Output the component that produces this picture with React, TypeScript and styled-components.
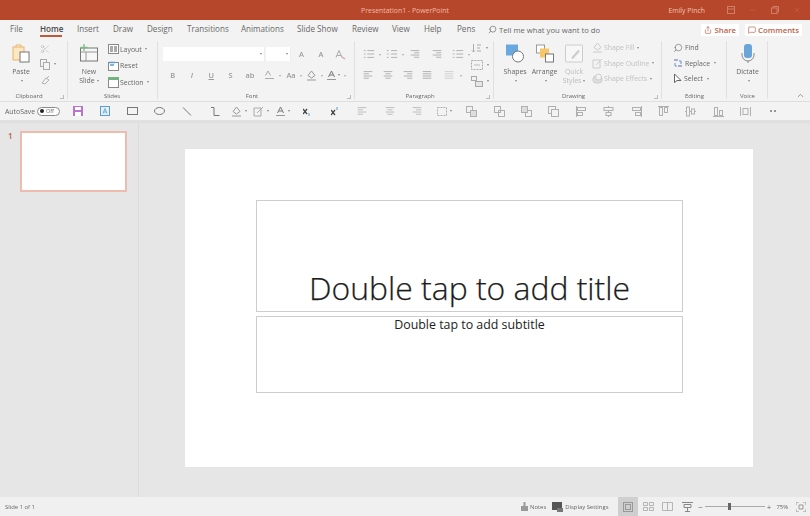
import React from "react";
import styled, { createGlobalStyle } from "styled-components";
import { Scissors, Search, MessageSquare, Share, X, Minus, ChevronUp } from "lucide-react";

const Global = createGlobalStyle`
  html, body { margin: 0; padding: 0; background: #e6e6e6; }
  body { font-family: "Open Sans", "Noto Sans", "Liberation Sans", sans-serif; }
  * { box-sizing: border-box; }
`;

const Page = styled.div`
  width: 810px; height: 516px; display: flex; flex-direction: column; overflow: hidden; background: #e6e6e6;
`;
const TitleBar = styled.header`
  height: 20px; background: #b7472a; display: flex; align-items: center; position: relative; flex: none;
`;
const DocName = styled.div`
  width: 100%; text-align: center; padding-right: 0; font-size: 6.9px; color: #f0bba9;
`;
const WindowControls = styled.div`
  position: absolute; right: 9px; top: 0; height: 20px; display: flex; align-items: center; gap: 14px; color: #cf7f66;
`;
const UserName = styled.span`
  font-size: 6.9px; color: #eec3b4; margin-right: 8px;
`;
const TabRow = styled.nav`
  height: 19px; background: #f3f3f3; display: flex; align-items: center; flex: none; padding-left: 10px; position: relative;
`;
const Tab = styled.span<{ $active?: boolean; $w: number }>`
  width: ${p => p.$w}px; flex: none; height: 19px; line-height: 18px; font-size: 8.1px; white-space: nowrap;
  color: ${p => (p.$active ? "#4a4a4a" : "#686868")}; font-weight: ${p => (p.$active ? 600 : 400)}; position: relative;
  ${p => p.$active && `&::after { content: ""; position: absolute; left: 0; width: 22px; top: 15px; height: 1.5px; background: #c0583c; }`}
`;
const TellMe = styled.span`
  display: flex; align-items: center; gap: 2px; font-size: 7.7px; color: #686868; margin-left: -2px;
`;
const Actions = styled.div`
  position: absolute; right: 8px; top: 4px; display: flex; gap: 6px;
`;
const ActionButton = styled.span`
  height: 12px; background: #fff; color: #bb6048; font-size: 7.8px; font-weight: 600; display: flex; align-items: center; gap: 2px; padding: 0 3px;
`;
const Ribbon = styled.section`
  height: 63px; background: #f3f3f3; display: flex; flex: none; position: relative; border-bottom: 1px solid #dedede;
  filter: blur(0.3px);
`;
const Group = styled.div<{ $w: number }>`
  width: ${p => p.$w}px; flex: none; display: flex; flex-direction: column; position: relative;
  &::after { content: ""; position: absolute; right: 0; top: 2px; bottom: 2px; width: 1px; background: #e0e0e0; }
`;
const GroupBody = styled.div`
  flex: 1; display: flex; min-height: 0; padding-top: 5px;
`;
const GroupLabel = styled.div<{ $pr?: number }>`
  height: 8px; line-height: 8px; margin-bottom: 1px; font-size: 6px; text-align: center; color: #666; flex: none; padding-right: ${p => p.$pr ?? 9}px;
`;
const Launcher = styled.span`
  position: absolute; right: 4px; bottom: 2px; width: 4px; height: 4px; border-right: 1px solid #bbb; border-bottom: 1px solid #bbb;
`;
const Big = styled.div<{ $w: number; $ml?: number; $off?: boolean }>`
  width: ${p => p.$w}px; margin-left: ${p => p.$ml ?? 0}px; flex: none; display: flex; flex-direction: column; align-items: center;
  font-size: 6.9px; line-height: 9px; color: ${p => (p.$off ? "#bbb" : "#666")}; text-align: center;
  svg { flex: none; height: 19px; margin-bottom: 4px; }
`;
const BigLine = styled.span`
  display: flex; align-items: center; justify-content: center; height: 9px;
`;
const Stack = styled.div<{ $ml: number; $mt: number; $h: number }>`
  margin-left: ${p => p.$ml}px; margin-top: ${p => p.$mt}px; flex: none; display: flex; flex-direction: column;
  & > div { height: ${p => p.$h}px; }
`;
const Line = styled.div<{ $off?: boolean; $gap?: number }>`
  display: flex; align-items: center; gap: ${p => p.$gap ?? 2}px; font-size: 6.9px; white-space: nowrap; color: ${p => (p.$off ? "#c2c2c2" : "#666")};
`;
const Caret = styled.span`
  display: inline-block; flex: none; width: 0; height: 0; border-left: 1.5px solid transparent; border-right: 1.5px solid transparent; border-top: 2px solid #888; margin-left: 2px;
`;
const ColumnGrid = styled.div<{ $pl: number }>`
  display: flex; flex-direction: column; padding-left: ${p => p.$pl}px; gap: 7px; padding-top: 3px;
`;
const FieldRow = styled.div`
  display: flex; align-items: center; height: 14px;
`;
const Field = styled.div<{ $w: number; $mr?: number }>`
  width: ${p => p.$w}px; height: 14px; background: #fff; border-right: 1px solid #eee; flex: none; margin-right: ${p => p.$mr ?? 0}px;
  display: flex; align-items: center; justify-content: flex-end; padding-right: 2px;
`;
const IconRow = styled.div`
  display: flex; align-items: center; height: 14px;
`;
const Cell = styled.span<{ $w: number; $caret?: boolean; $italic?: boolean; $u?: boolean }>`
  width: ${p => p.$w}px; display: flex; justify-content: center; align-items: center; font-size: 7.4px; color: #9a9a9a; flex: none; font-weight: 600; position: relative;
  font-style: ${p => (p.$italic ? "italic" : "normal")}; text-decoration: ${p => (p.$u ? "underline" : "none")};
  ${p => p.$caret && `&::after { content: ""; position: absolute; right: -1px; top: 50%; border-left: 1.5px solid transparent; border-right: 1.5px solid transparent; border-top: 2px solid #aaa; }`}
`;
const Collapse = styled.span`
  position: absolute; right: 5px; bottom: 1px; color: #777; display: flex;
`;
const Qat = styled.section`
  height: 19px; background: #f3f3f3; display: flex; align-items: center; flex: none; padding-left: 5px; border-bottom: 1px solid #e1e1e1;
  filter: blur(0.3px);
`;
const AutoSave = styled.span`
  font-size: 6.9px; color: #666; width: 32px; flex: none;
`;
const Toggle = styled.span`
  width: 23px; height: 9px; border: 1px solid #8a8a8a; border-radius: 5px; background: #fff; flex: none; display: flex; align-items: center; font-size: 5.4px; color: #666; padding-left: 2px; gap: 2px; margin-right: 4px;
  &::before { content: ""; width: 4px; height: 4px; border-radius: 50%; background: #222; }
`;
const QatCell = styled.span<{ $w: number }>`
  width: ${p => p.$w}px; flex: none; display: flex; justify-content: center; align-items: center; height: 14px; gap: 1px;
`;
const Gutter = styled.div`
  height: 2px; background: #e0e0e0; flex: none;
`;
const Main = styled.main`
  flex: 1; display: flex; min-height: 0; background: #e6e6e6;
`;
const Sidebar = styled.aside`
  width: 139px; flex: none; border-right: 1px solid #dcdcdc; display: flex; padding: 8px 0 0 8px; gap: 7px; align-items: flex-start;
`;
const SlideNo = styled.span`
  font-size: 8px; line-height: 10px; color: #b7583f; font-weight: 600; width: 5px;
`;
const Thumb = styled.div`
  width: 107px; height: 61px; background: #fff; border: 2px solid #eebcae;
`;
const Canvas = styled.div`
  flex: 1; padding: 26px 57px 30px 46px; display: flex; min-width: 0;
`;
const Slide = styled.div`
  flex: 1; background: #fff; padding: 51px 70px 74px 71px; display: flex; flex-direction: column; gap: 4px;
`;
const TitleBox = styled.div`
  height: 112px; flex: none; border: 1px solid #cdcdcd; display: flex; align-items: flex-end; justify-content: center;
  font-size: 31.9px; line-height: 44px; font-weight: 300; color: #1c1c1c; padding-bottom: 1px; white-space: nowrap; -webkit-text-stroke: 0.25px #1c1c1c;
`;
const SubtitleBox = styled.div`
  flex: 1; border: 1px solid #cdcdcd; text-align: center; font-size: 12.4px; line-height: 16px; color: #222;
`;
const StatusBar = styled.footer`
  height: 19px; background: #f0f0f0; display: flex; align-items: center; flex: none; padding-left: 5px; font-size: 5.9px; color: #666;
  filter: blur(0.25px);
`;
const StatusRight = styled.div`
  margin-left: auto; display: flex; align-items: center; height: 19px; padding-right: 4px;
`;
const StatusItem = styled.span<{ $ml: number }>`
  margin-left: ${p => p.$ml}px; display: flex; align-items: center; gap: 2px; white-space: nowrap;
`;
const ViewButton = styled.span<{ $on?: boolean }>`
  width: 19.7px; height: 19px; display: flex; align-items: center; justify-content: center; background: ${p => (p.$on ? "#cfcfcf" : "transparent")};
`;
const Views = styled.div`
  display: flex; margin-left: 10px;
`;
const Slider = styled.span`
  width: 60px; height: 1px; background: #aaa; position: relative; display: block;
  &::after { content: ""; position: absolute; left: 23px; top: -3px; width: 3px; height: 7px; background: #666; }
`;
const ZoomControl = styled.div`
  display: flex; align-items: center; gap: 2px; margin-left: 1px; font-size: 8px; color: #666;
`;

const S = ({ w = 14, h = 14, vb = "0 0 14 14", children }: { w?: number; h?: number; vb?: string; children: React.ReactNode }) => (
  <svg width={w} height={h} viewBox={vb} fill="none" stroke="#a0a0a0" strokeWidth="1">{children}</svg>
);

const Lines = ({ kind, c = "#a8a8a8" }: { kind: string; c?: string }) => {
  const widths: Record<string, [number, number][]> = {
    left: [[2, 12], [2, 8], [2, 12], [2, 8]],
    center: [[2, 12], [4, 10], [2, 12], [4, 10]],
    right: [[2, 12], [6, 12], [2, 12], [6, 12]],
    just: [[2, 12], [2, 12], [2, 12], [2, 12]],
  };
  return (
    <S w={12} h={12}>
      {widths[kind].map(([a, b], i) => <path key={i} d={`M${a} ${3 + i * 2.6}H${b}`} stroke={c} />)}
    </S>
  );
};
const Bullets = ({ indent }: { indent?: boolean }) => (
  <S w={12} h={12}>
    {[3, 7, 11].map(y => <path key={y} d={`M1 ${y}h2M${indent ? 6 : 5} ${y}H13`} stroke="#a8a8a8" />)}
  </S>
);
const PasteIcon = () => (
  <S w={18} h={19} vb="0 0 18 19">
    <rect x="1" y="3" width="11" height="13" fill="#fbe7c2" stroke="#e8b566" />
    <path d="M4 3V1h5v2" stroke="#e8b566" />
    <rect x="8" y="8" width="9" height="10" fill="#fff" stroke="#777" />
  </S>
);
const NewSlideIcon = () => (
  <S w={18} h={19} vb="0 0 18 19">
    <rect x=".5" y="4" width="17" height="13" fill="#f7f7f7" stroke="#777" />
    <path d="M.5 8H17.500M6 8V17" stroke="#999" />
    <path d="M4 0V7M.5 3.500H7.500" stroke="#7bbb87" strokeWidth="1.300" />
  </S>
);
const LayoutIcon = () => (
  <S w={11} h={10} vb="0 0 11 10">
    <rect x=".5" y=".5" width="10" height="9" stroke="#888" fill="#fff" />
    <rect x="2" y="2" width="3" height="6" fill="#aaa" stroke="none" />
    <rect x="6" y="2" width="3" height="6" fill="#aaa" stroke="none" />
  </S>
);
const ResetIcon = () => (
  <S w={11} h={10} vb="0 0 11 10">
    <rect x=".5" y="1.500" width="10" height="8" stroke="#888" fill="#fff" />
    <path d="M1 1.500H7M2 4h4" stroke="#5a9bd0" strokeWidth="1.400" />
  </S>
);
const SectionIcon = () => (
  <S w={11} h={11} vb="0 0 11 11">
    <rect x=".5" y=".5" width="10" height="10" stroke="#888" fill="#fff" />
    <rect x="0" y="0" width="11" height="3" fill="#72b281" stroke="none" />
  </S>
);
const ShapesIcon = () => (
  <S w={18} h={18} vb="0 0 18 18">
    <rect x="0" y="0" width="12" height="11" fill="#6aa9e0" stroke="none" />
    <circle cx="12" cy="12" r="5.500" fill="#fff" stroke="#777" />
  </S>
);
const ArrangeIcon = () => (
  <S w={18} h={18} vb="0 0 18 18">
    <rect x=".5" y=".5" width="8" height="8" fill="#fff" stroke="#999" />
    <rect x="4" y="4" width="9" height="9" fill="#f6c667" stroke="none" />
    <rect x="9.500" y="9.500" width="8" height="8" fill="#fff" stroke="#777" />
  </S>
);
const QuickIcon = () => (
  <S w={18} h={18} vb="0 0 18 18">
    <rect x=".5" y=".5" width="17" height="17" rx="1" fill="#f7f7f7" stroke="#ccc" />
    <path d="M7 14L14 6" stroke="#ccc" strokeWidth="2" />
  </S>
);
const MicIcon = () => (
  <S w={14} h={19} vb="0 0 14 19">
    <rect x="3" y="0" width="8" height="14" rx="3" fill="#6aa5da" stroke="none" />
    <path d="M1 9v2a6 6 0 0 0 12 0V9M7 17v2" stroke="#888" />
  </S>
);
const FillIcon = ({ c = "#ccc" }: { c?: string }) => (
  <S w={11} h={11} vb="0 0 11 11"><path d="M5.500 1L9 5.500 5.500 8 2 5.500zM1 10H10" stroke={c} /></S>
);
const OutlineIcon = ({ c = "#ccc" }: { c?: string }) => (
  <S w={11} h={11} vb="0 0 11 11"><path d="M1 2h7v8H1zM4 7L10 1" stroke={c} /></S>
);
const EffectsIcon = () => (
  <S w={11} h={11} vb="0 0 11 11"><rect x="1" y="3" width="9" height="7" rx="3" fill="#ddd" stroke="#ccc" /><circle cx="6.500" cy="4" r="3" fill="#f3f3f3" stroke="#ccc" /></S>
);
const FindIcon = () => <Search size={10} color="#666" strokeWidth={1.4} style={{ transform: "scaleX(-1)" }} />;
const ReplaceIcon = () => (
  <S w={10} h={11} vb="0 0 10 11"><path d="M1 2h4M5 8h4" stroke="#a78bc8" strokeWidth="1.400" /><path d="M2 5v3h2M8 6V3H6" stroke="#5a9bd0" /></S>
);
const SelectIcon = () => (
  <S w={9} h={11} vb="0 0 9 11"><path d="M1.500 1V9.500L4 7.500h4z" stroke="#666" fill="#fff" /></S>
);

const Sort = () => <S w={11} h={11} vb="0 0 11 11"><path d="M2.500 1v8M1 7.500L2.500 9 4 7.500M6 2h4M6 5h3M6 8h4" stroke="#aaa" /></S>;
const TextBoxAlign = () => <S w={12} h={10} vb="0 0 12 10"><rect x=".5" y=".5" width="11" height="9" stroke="#aaa" strokeDasharray="2 1" /><path d="M3 5h6" stroke="#bbb" /></S>;
const SmartArt = () => <S w={12} h={11} vb="0 0 12 11"><rect x=".5" y=".5" width="5" height="4" stroke="#aaa" /><rect x="4.500" y="5.500" width="7" height="5" stroke="#aaa" fill="#e6e6e6" /></S>;
const Clear = () => <S w={11} h={11} vb="0 0 11 11"><path d="M1 8.500L4 1.500 7 8.500M2 6.500H6" stroke="#aaa" /><path d="M7 8l3 2" stroke="#d8a0c0" strokeWidth="1.500" /></S>;
const Spacing = () => <S w={11} h={10} vb="0 0 11 10"><path d="M1.500 5.500L4 1 6.500 5.500M1 8.500H10" stroke="#aaa" /></S>;

const qatWidths = (i: number) => (i >= 6 && i <= 8 ? 21.8 : 27.4);

const QatIcon = ({ i }: { i: number }) => {
  const a = "#b0b0b0";
  switch (i) {
    case 0: return <S w={10} h={10} vb="0 0 10 10"><rect width="10" height="10" fill="#bb74cb" stroke="none" /><rect x="2" y="1" width="6" height="3" fill="#fff" stroke="none" /><rect x="2" y="6" width="6" height="4" fill="#fff" stroke="none" /></S>;
    case 1: return <S w={10} h={10} vb="0 0 10 10"><rect x=".5" y=".5" width="9" height="9" stroke="#5a9bd0" fill="#e6f0f9" /><path d="M3 7.500L5 2.500 7 7.500M3.800 6H6.200" stroke="#5a9bd0" strokeWidth=".8" /></S>;
    case 2: return <S w={11} h={8} vb="0 0 11 8"><rect x=".5" y=".5" width="10" height="7" stroke="#777" /></S>;
    case 3: return <S w={11} h={8} vb="0 0 11 8"><ellipse cx="5.500" cy="4" rx="5" ry="3.500" stroke="#777" /></S>;
    case 4: return <S w={10} h={9} vb="0 0 10 9"><path d="M1 0.500L9 8.500" stroke="#777" /></S>;
    case 5: return <S w={10} h={9} vb="0 0 10 9"><path d="M1 .5H4V8.500H9.500" stroke="#777" /></S>;
    case 6: return <><FillIcon c="#999" /><Caret /></>;
    case 7: return <><OutlineIcon c="#aaa" /><Caret /></>;
    case 8: return <><S w={9} h={10} vb="0 0 9 10"><path d="M1.500 7L4.500 1 7.500 7M2.800 5H6.200" stroke="#777" /><path d="M0 9.500H9" stroke="#999" /></S><Caret /></>;
    case 9: return <S w={8} h={9} vb="0 0 8 9"><path d="M0 2L4 7M4 2L0 7" stroke="#444" strokeWidth="1.300" /><path d="M6 6v3" stroke="#5a9bd0" /></S>;
    case 10: return <S w={8} h={9} vb="0 0 8 9"><path d="M0 3L4 8M4 3L0 8" stroke="#444" strokeWidth="1.300" /><path d="M6 0v3" stroke="#5a9bd0" /></S>;
    case 11: return <Lines kind="left" c="#b5b5b5" />;
    case 12: return <Lines kind="center" c="#b5b5b5" />;
    case 13: return <Lines kind="right" c="#b5b5b5" />;
    case 14: return <><S w={10} h={9} vb="0 0 10 9"><rect x=".5" y=".5" width="9" height="8" stroke={a} strokeDasharray="2 1" /></S><Caret /></>;
    case 15: return <S w={11} h={11} vb="0 0 11 11"><rect x=".5" y=".5" width="6" height="6" stroke={a} /><rect x="4.500" y="4.500" width="6" height="6" stroke={a} fill="#ddd" /></S>;
    case 16: return <S w={11} h={11} vb="0 0 11 11"><rect x=".5" y=".5" width="6" height="6" stroke={a} /><rect x="4.500" y="4.500" width="6" height="6" stroke={a} /></S>;
    case 17: return <S w={11} h={11} vb="0 0 11 11"><rect x="4.500" y="4.500" width="6" height="6" stroke={a} /><rect x=".5" y=".5" width="6" height="6" stroke={a} fill="#ddd" /></S>;
    case 18: return <S w={11} h={11} vb="0 0 11 11"><rect x=".5" y=".5" width="7" height="7" stroke={a} /><rect x="3.500" y="3.500" width="7" height="7" stroke={a} fill="#f3f3f3" /></S>;
    case 19: return <S w={11} h={11} vb="0 0 11 11"><path d="M.5 0V11" stroke={a} /><rect x="1.500" y="1.500" width="8" height="3" stroke={a} /><rect x="1.500" y="6.500" width="5" height="3" stroke={a} /></S>;
    case 20: return <S w={11} h={11} vb="0 0 11 11"><path d="M5.500 0V11" stroke={a} /><rect x="1" y="1.500" width="9" height="3" stroke={a} fill="#f3f3f3" /><rect x="3" y="6.500" width="5" height="3" stroke={a} fill="#f3f3f3" /></S>;
    case 21: return <S w={11} h={11} vb="0 0 11 11"><path d="M10.500 0V11" stroke={a} /><rect x="1.500" y="1.500" width="8" height="3" stroke={a} /><rect x="4.500" y="6.500" width="5" height="3" stroke={a} /></S>;
    case 22: return <S w={11} h={11} vb="0 0 11 11"><path d="M0 .5H11" stroke={a} /><rect x="1.500" y="1.500" width="3" height="8" stroke={a} /><rect x="6.500" y="1.500" width="3" height="5" stroke={a} /></S>;
    case 23: return <S w={11} h={11} vb="0 0 11 11"><path d="M0 5.500H11" stroke={a} /><rect x="1.500" y="1" width="3" height="9" stroke={a} fill="#f3f3f3" /><rect x="6.500" y="3" width="3" height="5" stroke={a} fill="#f3f3f3" /></S>;
    case 24: return <S w={11} h={11} vb="0 0 11 11"><path d="M0 10.500H11" stroke={a} /><rect x="1.500" y="1.500" width="3" height="8" stroke={a} /><rect x="6.500" y="4.500" width="3" height="5" stroke={a} /></S>;
    case 25: return <S w={11} h={11} vb="0 0 11 11"><path d="M.5 1V10M10.500 1V10" stroke={a} /><rect x="3" y="2.500" width="5" height="6" stroke={a} /></S>;
    default: return <S w={8} h={8} vb="0 0 8 8"><path d="M1 4h2M5 4h2" stroke="#777" strokeWidth="1.300" /></S>;
  }
};

const tabs: [string, number][] = [["File", 30], ["Home", 37], ["Insert", 36], ["Draw", 34], ["Design", 40], ["Transitions", 54], ["Animations", 56], ["Slide Show", 55], ["Review", 40], ["View", 32], ["Help", 33], ["Pens", 33]];

export default function App() {
  return (
    <Page>
      <Global />
      <TitleBar>
        <DocName>Presentation1 - PowerPoint</DocName>
        <WindowControls>
          <UserName>Emily Pinch</UserName>
          <svg width="8" height="8" viewBox="0 0 8 8" fill="none" stroke="currentColor"><rect x=".5" y=".5" width="7" height="7" /><path d="M.5 3H7.500" /></svg>
          <Minus size={8} strokeWidth={1} />
          <svg width="8" height="8" viewBox="0 0 8 8" fill="none" stroke="currentColor"><rect x=".5" y="2" width="5.500" height="5.500" /><path d="M2 2V.5H7.500V6H6" /></svg>
          <X size={8} strokeWidth={1} />
        </WindowControls>
      </TitleBar>
      <TabRow>
        {tabs.map(([t, w]) => <Tab key={t} $w={w} $active={t === "Home"}>{t}</Tab>)}
        <TellMe><Search size={9} color="#777" style={{ transform: "scaleX(-1)" }} />Tell me what you want to do</TellMe>
        <Actions>
          <ActionButton><Share size={8} />Share</ActionButton>
          <ActionButton><MessageSquare size={8} />Comments</ActionButton>
        </Actions>
      </TabRow>
      <Ribbon>
        <Group $w={68}>
          <GroupBody>
            <Big $w={26} $ml={8}><PasteIcon />Paste<BigLine><Caret /></BigLine></Big>
            <Stack $ml={6} $mt={-3} $h={15.5}>
              <Line><Scissors size={10} color="#b0b0b0" strokeWidth={1.2} /></Line>
              <Line><svg width="10" height="11" viewBox="0 0 10 11" fill="none" stroke="#aaa"><rect x=".5" y=".5" width="6" height="7" /><rect x="3.500" y="3.500" width="6" height="7" fill="#f3f3f3" /></svg><Caret /></Line>
              <Line><svg width="10" height="10" viewBox="0 0 10 10" fill="none" stroke="#b0b0b0"><path d="M2 8L6 3l3 2-4 4zM7 3l2-2" /></svg></Line>
            </Stack>
          </GroupBody>
          <GroupLabel $pr={10}>Clipboard</GroupLabel>
          <Launcher />
        </Group>
        <Group $w={90}>
          <GroupBody>
            <Big $w={30} $ml={6}><NewSlideIcon />New<BigLine>Slide<Caret /></BigLine></Big>
            <Stack $ml={4} $mt={-3} $h={16.5}>
              <Line $gap={1}><LayoutIcon />Layout<Caret /></Line>
              <Line $gap={1}><ResetIcon />Reset</Line>
              <Line $gap={1}><SectionIcon />Section<Caret /></Line>
            </Stack>
          </GroupBody>
          <GroupLabel $pr={2}>Slides</GroupLabel>
        </Group>
        <Group $w={197}>
          <GroupBody>
            <ColumnGrid $pl={5}>
              <FieldRow>
                <Field $w={102} $mr={1}><Caret /></Field><Field $w={25} $mr={1}><Caret /></Field>
                <Cell $w={19}>A</Cell><Cell $w={20}>A</Cell><Cell $w={18}><Clear /></Cell>
              </FieldRow>
              <IconRow>
                <Cell $w={19.3}>B</Cell><Cell $w={19.3} $italic>I</Cell><Cell $w={19.3} $u>U</Cell><Cell $w={19.3}>S</Cell><Cell $w={19.3}>ab</Cell>
                <Cell $w={21} $caret><Spacing /></Cell><Cell $w={21} $caret>Aa</Cell>
                <Cell $w={21} $caret><FillIcon c="#999" /></Cell>
                <Cell $w={23} $caret><QatIcon i={8} /></Cell>
              </IconRow>
            </ColumnGrid>
          </GroupBody>
          <GroupLabel>Font</GroupLabel>
          <Launcher />
        </Group>
        <Group $w={139}>
          <GroupBody>
            <ColumnGrid $pl={3}>
              <IconRow>
                <Cell $w={22} $caret><Bullets /></Cell><Cell $w={23} $caret><Bullets indent /></Cell><Cell $w={23}><Lines kind="right" /></Cell><Cell $w={21}><Lines kind="right" /></Cell><Cell $w={22} $caret><Bullets /></Cell>
              </IconRow>
              <IconRow>
                <Cell $w={20}><Lines kind="left" /></Cell><Cell $w={20}><Lines kind="center" /></Cell><Cell $w={19}><Lines kind="right" /></Cell><Cell $w={19}><Lines kind="just" /></Cell><Cell $w={25} $caret><Lines kind="just" c="#ccc" /></Cell>
              </IconRow>
            </ColumnGrid>
            <Stack $ml={2} $mt={-4} $h={16.5}>
              <Line><Sort /><Caret /></Line>
              <Line><TextBoxAlign /><Caret /></Line>
              <Line><SmartArt /><Caret /></Line>
            </Stack>
          </GroupBody>
          <GroupLabel>Paragraph</GroupLabel>
          <Launcher />
        </Group>
        <Group $w={168}>
          <GroupBody>
            <Big $w={30} $ml={6}><ShapesIcon />Shapes<BigLine><Caret /></BigLine></Big>
            <Big $w={29}><ArrangeIcon />Arrange<BigLine><Caret /></BigLine></Big>
            <Big $w={30} $off><QuickIcon />Quick<BigLine>Styles<Caret /></BigLine></Big>
            <Stack $ml={3} $mt={-4} $h={15.5}>
              <Line $off $gap={1}><FillIcon />Shape Fill<Caret /></Line>
              <Line $off $gap={1}><OutlineIcon />Shape Outline<Caret /></Line>
              <Line $off $gap={1}><EffectsIcon />Shape Effects<Caret /></Line>
            </Stack>
          </GroupBody>
          <GroupLabel>Drawing</GroupLabel>
          <Launcher />
        </Group>
        <Group $w={65}>
          <GroupBody>
            <Stack $ml={11} $mt={-4} $h={15.5}>
              <Line><FindIcon />Find</Line>
              <Line><ReplaceIcon />Replace<Caret /></Line>
              <Line><SelectIcon />Select<Caret /></Line>
            </Stack>
          </GroupBody>
          <GroupLabel $pr={0}>Editing</GroupLabel>
        </Group>
        <Group $w={41}>
          <GroupBody>
            <Big $w={41}><MicIcon />Dictate<BigLine><Caret /></BigLine></Big>
          </GroupBody>
          <GroupLabel $pr={0}>Voice</GroupLabel>
        </Group>
        <Collapse><ChevronUp size={9} /></Collapse>
      </Ribbon>
      <Qat>
        <AutoSave>AutoSave</AutoSave>
        <Toggle>Off</Toggle>
        {Array.from({ length: 27 }, (_, i) => <QatCell key={i} $w={qatWidths(i)}><QatIcon i={i} /></QatCell>)}
      </Qat>
      <Gutter />
      <Main>
        <Sidebar>
          <SlideNo>1</SlideNo>
          <Thumb />
        </Sidebar>
        <Canvas>
          <Slide>
            <TitleBox>Double tap to add title</TitleBox>
            <SubtitleBox>Double tap to add subtitle</SubtitleBox>
          </Slide>
        </Canvas>
      </Main>
      <StatusBar>
        <span>Slide 1 of 1</span>
        <StatusRight>
          <StatusItem $ml={0}><svg width="7" height="9" viewBox="0 0 7 9" fill="#999"><path d="M0 9V4h7v5zM2.500 4V0h2v4z" /></svg>Notes</StatusItem>
          <StatusItem $ml={6}><svg width="11" height="10" viewBox="0 0 11 10"><rect width="10" height="8" fill="#555" /><rect x="5" y="6" width="6" height="4" fill="#777" /></svg>Display Settings</StatusItem>
          <Views>
            <ViewButton $on><svg width="10" height="10" fill="none" stroke="#999"><rect x=".5" y=".5" width="9" height="9" /><rect x="2.500" y="2.500" width="5" height="5" /></svg></ViewButton>
            <ViewButton><svg width="11" height="9" fill="none" stroke="#b5b5b5"><path d="M.5 .5h4v3h-4zM6.500 .5h4v3h-4zM.5 5.500h4v3h-4zM6.500 5.500h4v3h-4z" /></svg></ViewButton>
            <ViewButton><svg width="11" height="9" fill="none" stroke="#b5b5b5"><path d="M.5 .5h10v8H.5zM5.500 .5v8" /></svg></ViewButton>
            <ViewButton><svg width="11" height="10" fill="none" stroke="#888"><path d="M0 .5h11M2 2.500h7v3H2zM5.500 5.500v4M3 9.500h5" /></svg></ViewButton>
          </Views>
          <ZoomControl>−<Slider />+</ZoomControl>
          <StatusItem $ml={5}>75%</StatusItem>
          <StatusItem $ml={8}><svg width="10" height="10" fill="none" stroke="#999"><path d="M0 3V0h3M7 0h3v3M10 7v3H7M3 10H0V7M3 3h4v4H3z" /></svg></StatusItem>
        </StatusRight>
      </StatusBar>
    </Page>
  );
}
